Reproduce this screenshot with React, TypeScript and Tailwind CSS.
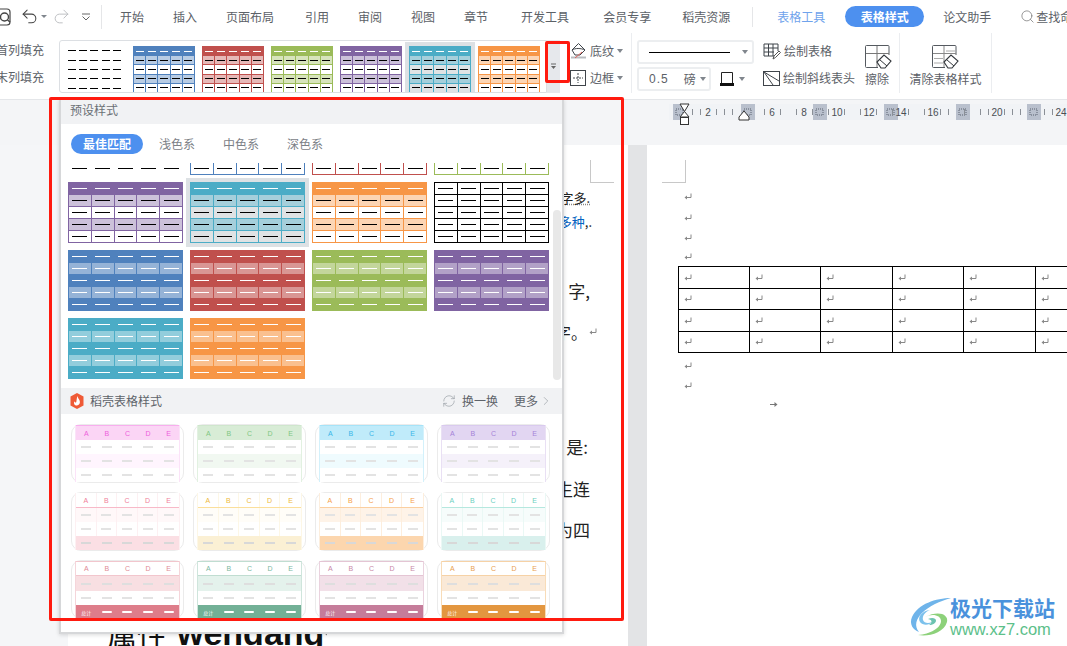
import React from "react";
import { Undo2, Redo2, RefreshCw, ChevronRight, Search } from "lucide-react";

const FONT = "font-['Noto_Sans_CJK_SC','Noto_Sans',sans-serif]";

type Sw = { hd: string; band: string; alt?: string; grid: string; dark?: boolean; sel?: boolean; mono?: boolean };

const blue: Sw = { hd: "bg-[#4f81bd]", band: "bg-[#b8cce4]", grid: "bg-[#4f81bd]" };
const red: Sw = { hd: "bg-[#c0504d]", band: "bg-[#e6b9b8]", grid: "bg-[#c0504d]" };
const green: Sw = { hd: "bg-[#9bbb59]", band: "bg-[#d7e4bc]", grid: "bg-[#9bbb59]" };
const purple: Sw = { hd: "bg-[#8064a2]", band: "bg-[#ccc1da]", grid: "bg-[#8064a2]" };
const teal: Sw = { hd: "bg-[#4bacc6]", band: "bg-[#a5cfdb]", alt: "bg-[#dfe2e4]", grid: "bg-[#4bacc6]", sel: true };
const orange: Sw = { hd: "bg-[#f79646]", band: "bg-[#fcd5b4]", grid: "bg-[#f79646]" };
const black: Sw = { hd: "bg-white", band: "bg-white", grid: "bg-black", mono: true };

const dBlue: Sw = { hd: "bg-[#4f81bd]", band: "bg-[#95b3d7]", grid: "bg-[#4f81bd]", dark: true };
const dRed: Sw = { hd: "bg-[#c0504d]", band: "bg-[#d99694]", grid: "bg-[#c0504d]", dark: true };
const dGreen: Sw = { hd: "bg-[#9bbb59]", band: "bg-[#c3d69b]", grid: "bg-[#9bbb59]", dark: true };
const dPurple: Sw = { hd: "bg-[#8064a2]", band: "bg-[#b2a1c7]", grid: "bg-[#8064a2]", dark: true };
const dTeal: Sw = { hd: "bg-[#4bacc6]", band: "bg-[#92cddc]", grid: "bg-[#4bacc6]", dark: true };
const dOrange: Sw = { hd: "bg-[#f79646]", band: "bg-[#fac08f]", grid: "bg-[#f79646]", dark: true };

const five = [0, 1, 2, 3, 4];

function Swatch({ s, small }: { s: Sw; small?: boolean }) {
  const size = small ? "w-[62px] h-[47px] shrink-0" : "w-[115px] h-[61px] shrink-0";
  const dash = small ? "w-[8px] h-px" : "w-[15px] h-px";
  const halo = s.sel ? "shadow-[0_0_0_4px_#dde1e4]" : "";
  return (
    <div className={`${size} ${halo} ${s.grid} grid grid-cols-5 grid-rows-5 gap-px p-px`}>
      {five.map((r) =>
        five.map((c) => {
          const isHead = r === 0;
          const isBand = r === 1 || r === 3;
          const bg = s.dark
            ? isBand ? s.band : s.hd
            : isHead ? s.hd : isBand ? s.band : s.alt ?? "bg-white";
          const white = s.dark || (isHead && !s.mono);
          return (
            <div key={`${r}-${c}`} className={`${bg} flex items-center justify-center`}>
              <div className={`${dash} ${white ? "bg-white" : "bg-black"}`} />
            </div>
          );
        })
      )}
    </div>
  );
}

function PlainSwatch({ small }: { small?: boolean }) {
  return (
    <div className={small ? "w-[57px] h-[47px] mr-[3px] shrink-0 grid grid-cols-5 grid-rows-5" : "w-[115px] h-[61px] shrink-0 grid grid-cols-5 grid-rows-5 gap-px p-px"}>
      {five.map((r) =>
        five.map((c) => (
          <div key={`${r}-${c}`} className="flex items-center justify-center">
            <div className={small ? "w-[8px] h-px bg-black" : "w-[15px] h-px bg-black"} />
          </div>
        ))
      )}
    </div>
  );
}

type Cd = {
  kind: "a" | "b" | "c";
  txt: string; hd: string; alt: string; foot: string; side: string; line: string;
};

const cards: Cd[] = [
  { kind: "a", txt: "text-[#ee5fdc]", hd: "bg-[#fbd5f5]", alt: "bg-[#fff5fe]", foot: "bg-white", side: "border-[#fbe3f8]", line: "border-[#f8aeee]" },
  { kind: "a", txt: "text-[#7fc783]", hd: "bg-[#d8ecd6]", alt: "bg-[#f1f8f1]", foot: "bg-white", side: "border-[#e2f1e1]", line: "border-[#cfe6cd]" },
  { kind: "a", txt: "text-[#38b6e8]", hd: "bg-[#c0ebfa]", alt: "bg-[#effbfe]", foot: "bg-white", side: "border-[#d3f1fb]", line: "border-[#a6e3f8]" },
  { kind: "a", txt: "text-[#a482d8]", hd: "bg-[#e2d6f2]", alt: "bg-[#f5f1fa]", foot: "bg-white", side: "border-[#e9e0f4]", line: "border-[#d9caee]" },
  { kind: "b", txt: "text-[#f0809a]", hd: "bg-white", alt: "bg-[#fff8f9]", foot: "bg-[#fbdfe4]", side: "border-[#fdf0f2]", line: "border-[#f8b9c8]" },
  { kind: "b", txt: "text-[#eeb93b]", hd: "bg-white", alt: "bg-[#fffdf8]", foot: "bg-[#fbf0d4]", side: "border-[#fdf7e6]", line: "border-[#fbdf9b]" },
  { kind: "b", txt: "text-[#f5a04a]", hd: "bg-white", alt: "bg-[#fef3e8]", foot: "bg-[#fcd6ae]", side: "border-[#fdeedd]", line: "border-[#fbcfa0]" },
  { kind: "b", txt: "text-[#6dd0c0]", hd: "bg-white", alt: "bg-[#f6fcfb]", foot: "bg-[#d9f0ed]", side: "border-[#eaf8f5]", line: "border-[#b5e8df]" },
  { kind: "c", txt: "text-[#e08a96]", hd: "bg-white", alt: "bg-[#f8dfe2]", foot: "bg-[#de7d8a]", side: "border-[#f5d5da]", line: "border-[#f2c6cd]" },
  { kind: "c", txt: "text-[#7ab89f]", hd: "bg-white", alt: "bg-[#e4f2ec]", foot: "bg-[#72b096]", side: "border-[#cfe5dc]", line: "border-[#c0ddd1]" },
  { kind: "c", txt: "text-[#c888a8]", hd: "bg-white", alt: "bg-[#f2e0e8]", foot: "bg-[#c57c9a]", side: "border-[#ead2de]", line: "border-[#e4c5d4]" },
  { kind: "c", txt: "text-[#e8a050]", hd: "bg-white", alt: "bg-[#fae9d7]", foot: "bg-[#e3963f]", side: "border-[#f8dcb8]", line: "border-[#f6d2a6]" },
];

function CardRow({ bg, dash, cols, first, strong, tall }: { bg: string; dash: string; cols?: string; first?: string; strong?: boolean; tall?: boolean }) {
  return (
    <div className={`${bg} ${tall ? "h-[15px]" : "h-[14px]"} grid grid-cols-5`}>
      {five.map((c) => (
        <div key={c} className={`flex items-center justify-center ${cols && c < 4 ? `border-r ${cols}` : ""}`}>
          {first && c === 0 ? (
            <span className={`text-[5px] leading-none text-white ${FONT}`}>{first}</span>
          ) : (
            <div className={`w-[10px] h-[2px] ${strong ? "rounded-full" : ""} ${dash}`} />
          )}
        </div>
      ))}
    </div>
  );
}

function Card({ d }: { d: Cd }) {
  const cols = d.kind === "b" ? d.side : undefined;
  return (
    <div className="w-[113px] h-[59px] rounded-[10px] border border-[#ebebeb] px-[3px] bg-white">
      <div className={`border-x ${d.side} h-full`}>
        <div className={`h-[15px] grid grid-cols-5 ${d.hd} ${d.kind === "b" ? `border-b ${d.line}` : ""} ${d.kind === "a" ? `border-t ${d.line}` : ""} ${d.kind === "c" ? `border-t border-b ${d.line}` : ""}`}>
          {["A", "B", "C", "D", "E"].map((l, i) => (
            <div key={l} className={`flex items-center justify-center text-[7px] leading-none font-['Liberation_Sans',sans-serif] ${d.txt} ${cols && i < 4 ? `border-r ${cols}` : ""}`}>
              {l}
            </div>
          ))}
        </div>
        {d.kind === "a" && (
          <>
            <CardRow bg="bg-white" dash="bg-[#e3e3e3]" />
            <CardRow bg={d.alt} dash="bg-[#e3e3e3]" />
            <CardRow bg="bg-white" dash="bg-[#e3e3e3]" />
          </>
        )}
        {d.kind === "b" && (
          <>
            <CardRow bg={d.alt} dash="bg-[#e3e3e3]" cols={cols} />
            <CardRow bg="bg-white" dash="bg-[#e3e3e3]" cols={cols} />
            <CardRow bg={d.foot} dash="bg-[#d8d8d8]" />
          </>
        )}
        {d.kind === "c" && (
          <>
            <CardRow bg={d.alt} dash="bg-[#dedede]" tall />
            <CardRow bg="bg-white" dash="bg-[#e3e3e3]" />
            <CardRow bg={d.foot} dash="bg-white" first="总计" strong />
          </>
        )}
      </div>
    </div>
  );
}

function Caret({ className = "" }: { className?: string }) {
  return <span className={`inline-block shrink-0 w-0 h-0 border-x-[3.5px] border-x-transparent border-t-[4px] border-t-[#80868d] ${className}`} />;
}

function Ret() {
  return (
    <svg width="8" height="8" viewBox="0 0 8 8" className="shrink-0">
      <path d="M7 0.5V4.5H2" fill="none" stroke="#888" strokeWidth="1" />
      <path d="M0.5 4.5L3 2.5V6.5Z" fill="#888" />
    </svg>
  );
}

const S = { fill: "none", stroke: "#3f444a", strokeWidth: 1 };

function ShadeIcon() {
  return (
    <svg width="17" height="18" viewBox="0 0 17 18" className="shrink-0">
      <path d="M2 8L8.5 1.5L15 8L10 13H5Z" {...S} />
      <path d="M2 8C5 6 11 6 15 8" {...S} />
      <path d="M1 15.5H16" stroke="#b9bcc0" strokeWidth="2" />
      <path d="M5 16L12 10" stroke="#e0605a" strokeWidth="1" />
    </svg>
  );
}
function BorderIcon() {
  return (
    <svg width="16" height="16" viewBox="0 0 16 16" className="shrink-0">
      <rect x="0.5" y="0.5" width="15" height="15" {...S} />
      <path d="M8 3V13M3 8H13" stroke="#3f444a" strokeWidth="1" strokeDasharray="2 1" />
    </svg>
  );
}
function FrameIcon() {
  return (
    <svg width="16" height="16" viewBox="0 0 16 16">
      <path d="M2.5 12V1.5H13.5V12" fill="none" stroke="#222" strokeWidth="1" />
      <rect x="1" y="12" width="14" height="3" fill="#111" />
    </svg>
  );
}
function DrawTableIcon() {
  return (
    <svg width="18" height="17" viewBox="0 0 18 17" className="shrink-0">
      <path d="M11 13H1V1H15V8M1 5H15M1 9H11M5.5 1V13M10 1V13" {...S} />
      <path d="M10 16L11 13L16 8L17.5 9.5L12.5 14.5Z" fill="none" stroke="#555" strokeWidth="1" />
    </svg>
  );
}
function DiagIcon() {
  return (
    <svg width="17" height="15" viewBox="0 0 17 15" className="shrink-0">
      <rect x="0.5" y="0.5" width="16" height="14" {...S} />
      <path d="M1 1L16 10M1 1L10 14" {...S} />
    </svg>
  );
}
function EraseIcon({ lined }: { lined?: boolean }) {
  return (
    <svg width="27" height="24" viewBox="0 0 27 24" className="shrink-0">
      <path d="M13 22.5H1.5a1 1 0 0 1-1-1V1.5a1 1 0 0 1 1-1H23a1 1 0 0 1 1 1V10" fill="none" stroke="#555a60" strokeWidth="1" />
      <path d="M1 8.5H24M12 1V22" stroke={lined ? "#888" : "#777"} strokeWidth="1" />
      {lined && <path d="M2 13.5H11M2 18H11M14 6H23" stroke="#aaa" strokeWidth="1" />}
      <path d="M12 17L19 10L26 16L20 23H16Z" fill="#fff" stroke="#33373c" strokeWidth="1.1" />
      <path d="M14.5 14.5L22 21" stroke="#33373c" strokeWidth="1" />
    </svg>
  );
}
function Flame() {
  return (
    <svg width="14" height="16" viewBox="0 0 14 16" className="shrink-0">
      <path d="M7 0L13.5 3.6V12.4L7 16L0.5 12.4V3.6Z" fill="#ef5a36" />
      <path d="M7.5 3C8 6 10.5 7 9.8 10C9.3 12 7.5 12.8 6 12.4C4.2 12 3.5 10 4.4 8.2C4.8 9.3 5.5 9.6 6 9.4C6.8 8.6 6.4 5.5 7.5 3Z" fill="#fff" />
    </svg>
  );
}

function Ruler() {
  const blocks = [673, 741, 813, 884, 956, 1027];
  const nums: [number, string][] = [[708, "2"], [772, "6"], [804, "8"], [837, "10"], [869, "12"], [901, "14"], [933, "16"], [997, "20"], [1061, "24"]];
  const ticks = [692, 700, 716, 724, 732, 764, 780, 796, 812, 828, 844, 860, 876, 892, 908, 924, 940, 948, 964, 980, 988, 1004, 1012, 1020, 1044, 1052];
  const o = 669;
  return (
    <svg width="398" height="26" viewBox="0 0 398 26" className="mt-[2px]">
      <rect x="0" y="2" width="398" height="16" fill="#f1f3f6" />
      {blocks.map((b) => (
        <g key={b}>
          <rect x={b - o} y="2" width={b === 673 ? 12 : 14} height="16" fill="#b9c0cd" />
          <rect x={b - o + 3} y="7" width="7" height="6" fill="none" stroke="#5b6270" strokeWidth="1" strokeDasharray="1 1" />
        </g>
      ))}
      {ticks.map((t) => (
        <path key={t} d={`M${t - o + 0.5} 7V13`} stroke="#8a8f96" strokeWidth="1" />
      ))}
      {nums.map(([x, n]) => (
        <text key={x} x={x - o} y="14" textAnchor="middle" fontSize="10" fill="#4a4f55" fontFamily="Liberation Sans, sans-serif">{n}</text>
      ))}
      <path d="M11 2H20L15.5 9.5Z" fill="#fff" stroke="#333" strokeWidth="1" />
      <path d="M15.5 9.5L20 15H11Z" fill="#fff" stroke="#333" strokeWidth="1" />
      <rect x="11.5" y="15.5" width="8" height="7" fill="#fff" stroke="#333" strokeWidth="1" />
      <path d="M70 15L75 9L80 15V18H70Z" fill="#fff" stroke="#333" strokeWidth="1" />
    </svg>
  );
}

function TabLabel({ children, cls }: { children: React.ReactNode; cls: string }) {
  return <span className={`${cls} shrink-0 text-[12px] leading-none whitespace-nowrap text-[#5c6167]`}>{children}</span>;
}

function TopBar() {
  return (
    <div className="h-[33px] flex items-center bg-white shrink-0">
      <div className="w-[101px] shrink-0 flex items-center h-full">
        <svg width="12" height="18" viewBox="0 0 12 18" className="shrink-0">
          <rect x="-7" y="1" width="17" height="16" rx="3" fill="none" stroke="#444" strokeWidth="1.2" />
          <circle cx="4.5" cy="9" r="4" fill="none" stroke="#444" strokeWidth="1.4" />
          <path d="M7.5 12L10 14" stroke="#444" strokeWidth="1.4" />
        </svg>
        <Undo2 size={19} strokeWidth={1.3} className="ml-[8px] shrink-0 text-[#444]" />
        <Caret className="ml-[2px] !border-t-[3px]" />
        <Redo2 size={19} strokeWidth={1.1} className="ml-[5px] shrink-0 text-[#b5b8bb]" />
        <svg width="10" height="8" viewBox="0 0 10 8" className="ml-[10px] shrink-0">
          <path d="M1 1H9" stroke="#666" />
          <path d="M1.5 3.5L5 7L8.5 3.5" fill="none" stroke="#666" />
        </svg>
      </div>
      <div className="w-px h-[24px] shrink-0 bg-[#e5e6e8]" />
      <TabLabel cls="ml-[18px]">开始</TabLabel>
      <TabLabel cls="ml-[29px]">插入</TabLabel>
      <TabLabel cls="ml-[29px]">页面布局</TabLabel>
      <TabLabel cls="ml-[31px]">引用</TabLabel>
      <TabLabel cls="ml-[29px]">审阅</TabLabel>
      <TabLabel cls="ml-[29px]">视图</TabLabel>
      <TabLabel cls="ml-[29px]">章节</TabLabel>
      <TabLabel cls="ml-[33px]">开发工具</TabLabel>
      <TabLabel cls="ml-[34px]">会员专享</TabLabel>
      <TabLabel cls="ml-[31px]">稻壳资源</TabLabel>
      <div className="w-px h-[20px] shrink-0 bg-[#e5e6e8] ml-[22px]" />
      <span className="ml-[24px] shrink-0 text-[12px] leading-none whitespace-nowrap text-[#6fa3ec]">表格工具</span>
      <span className="ml-[20px] shrink-0 w-[79px] h-[21px] rounded-full bg-[#4d90ef] text-white text-[12px] font-bold flex items-center justify-center whitespace-nowrap">表格样式</span>
      <TabLabel cls="ml-[19px]">论文助手</TabLabel>
      <Search size={15} strokeWidth={1.2} className="ml-[29px] text-[#777] shrink-0" />
      <span className="ml-[1px] shrink-0 text-[12px] leading-none whitespace-nowrap text-[#5c6167]">查找命令</span>
    </div>
  );
}

function Ribbon() {
  return (
    <div className="h-[67px] bg-white flex items-start border-b border-[#e4e6e9] shrink-0 text-[12px] text-[#5c6167]">
      <div className="w-[44px] shrink-0 flex flex-col items-end pt-[8px] gap-[9px]">
        <span className="h-[18px] leading-[18px] whitespace-nowrap">首列填充</span>
        <span className="h-[18px] leading-[18px] whitespace-nowrap">末列填充</span>
      </div>
      <div className="ml-[15px] mt-[7px] flex h-[53px] w-[501px] shrink-0">
        <div className="w-[488px] h-full border border-[#dcdfe3] rounded-l-[3px] overflow-hidden flex pl-[6px] pt-[5px] gap-[7px]">
          <PlainSwatch small />
          <Swatch s={blue} small />
          <Swatch s={red} small />
          <Swatch s={green} small />
          <Swatch s={purple} small />
          <Swatch s={teal} small />
          <Swatch s={orange} small />
        </div>
        <div className="w-[13px] bg-[#e6e8ec] flex items-center justify-center">
          <svg width="7" height="7" viewBox="0 0 7 7">
            <path d="M1 1H6" stroke="#666" />
            <path d="M1 3H6L3.5 6Z" fill="#666" />
          </svg>
        </div>
      </div>
      <div className="ml-[10px] w-[62px] shrink-0 flex flex-col pt-[9px] gap-[9px] border-r border-[#ebedf0] h-[60px]">
        <div className="h-[18px] flex items-center">
          <ShadeIcon />
          <span className="ml-[3px] leading-none whitespace-nowrap">底纹</span>
          <Caret className="ml-[3px]" />
        </div>
        <div className="h-[18px] flex items-center">
          <BorderIcon />
          <span className="ml-[4px] leading-none whitespace-nowrap">边框</span>
          <Caret className="ml-[3px]" />
        </div>
      </div>
      <div className="ml-[5px] w-[117px] shrink-0 pt-[7px] flex flex-col gap-[3px]">
        <div className="h-[24px] border-2 border-[#eceef0] rounded-[3px] flex items-center pl-[10px] pr-[4px]">
          <div className="w-[81px] h-px bg-black" />
          <Caret className="ml-auto" />
        </div>
        <div className="flex items-center h-[24px]">
          <div className="w-[74px] h-full border-2 border-[#eceef0] rounded-[3px] flex items-center pl-[10px] pr-[3px]">
            <span className="font-['Liberation_Sans',sans-serif] text-[12px] tracking-[1px]">0.5</span>
            <span className="ml-[15px] whitespace-nowrap">磅</span>
            <Caret className="ml-auto" />
          </div>
          <span className="ml-[8px]"><FrameIcon /></span>
          <Caret className="ml-[4px]" />
        </div>
      </div>
      <div className="ml-[9px] w-[102px] shrink-0 pt-[9px] flex flex-col gap-[9px]">
        <div className="h-[18px] flex items-center gap-[3px] whitespace-nowrap leading-none"><DrawTableIcon />绘制表格</div>
        <div className="h-[18px] flex items-center gap-[3px] whitespace-nowrap leading-none"><DiagIcon />绘制斜线表头</div>
      </div>
      <div className="w-[34px] shrink-0 flex flex-col items-start pt-[12px]">
        <EraseIcon />
        <span className="mt-[1px] leading-[18px] whitespace-nowrap">擦除</span>
      </div>
      <div className="w-[93px] shrink-0 h-[60px] border-x border-[#ebedf0] flex flex-col items-center pt-[12px]">
        <EraseIcon lined />
        <span className="mt-[1px] leading-[18px] whitespace-nowrap">清除表格样式</span>
      </div>
    </div>
  );
}

function Panel() {
  return (
    <div className={`absolute left-[59px] top-[99px] w-[505px] h-[535px] bg-white border-x-2 border-b-2 border-[#d6d7d9] shadow-[0_1px_4px_rgba(0,0,0,0.15)] flex flex-col text-[12px] ${FONT}`}>
      <div className="h-[25px] shrink-0 bg-[#f1f2f4] pl-[9px] pb-[3px] flex items-center text-[#6b7076]">预设样式</div>
      <div className="h-[20px] mt-[10px] ml-[10px] shrink-0 flex items-center text-[#7c8187]">
        <span className="w-[72px] h-[20px] rounded-full bg-[#4d90ef] text-white font-bold flex items-center justify-center">最佳匹配</span>
        <span className="ml-[16px]">浅色系</span>
        <span className="ml-[28px]">中色系</span>
        <span className="ml-[28px]">深色系</span>
      </div>
      <div className="relative mt-[9px] h-[225px] shrink-0 overflow-hidden">
        <div className="grid grid-cols-[115px_115px_115px_115px] gap-x-[7px] gap-y-[7px] pl-[7px] mt-[-49px]">
          <PlainSwatch />
          <Swatch s={blue} />
          <Swatch s={red} />
          <Swatch s={green} />
          <Swatch s={purple} />
          <Swatch s={teal} />
          <Swatch s={orange} />
          <Swatch s={black} />
          <Swatch s={dBlue} />
          <Swatch s={dRed} />
          <Swatch s={dGreen} />
          <Swatch s={dPurple} />
          <Swatch s={dTeal} />
          <Swatch s={dOrange} />
        </div>
        <div className="absolute left-[492px] top-[47px] w-[8px] h-[170px] rounded-full bg-[#e8e8e8]" />
      </div>
      <div className="h-[26px] shrink-0 bg-[#f1f2f4] flex items-center pl-[9px] pr-[9px] text-[#5e636a]">
        <Flame />
        <span className="ml-[6px]">稻壳表格样式</span>
        <RefreshCw size={14} strokeWidth={1} className="ml-auto text-[#8a9097]" />
        <span className="ml-[6px]">换一换</span>
        <span className="ml-[16px]">更多</span>
        <ChevronRight size={14} strokeWidth={1} className="ml-[1px] text-[#8a9097]" />
      </div>
      <div className="pt-[10px] pl-[10px] grid grid-cols-[113px_113px_113px_113px] gap-x-[9px] gap-y-[9px]">
        {cards.map((d, i) => <Card key={i} d={d} />)}
      </div>
    </div>
  );
}

function LeftPage() {
  return (
    <div className={`w-[560px] shrink-0 h-full bg-white relative flex flex-col items-end pr-[38px] text-[16px] text-[#222] ${FONT}`}>
      <div className="absolute left-[522px] top-[15px] w-[24px] h-[23px] border-l border-b border-[#c8c8c8]" />
      <div className="mt-[41px] h-[24px] leading-[24px] text-[13px] underline decoration-dotted decoration-[#888]">文字多.</div>
      <div className="h-[24px] leading-[24px] text-[13px] mr-[-2px]"><span className="text-[#0563c1]">多种</span>,.</div>
      <div className="mt-[45px] h-[24px] leading-[24px] text-[17px]">字,</div>
      <div className="mt-[17px] h-[24px] leading-[24px] flex items-center gap-[2px] mr-[-7px]">文字。<Ret /></div>
      <div className="mt-[91px] h-[24px] leading-[24px] text-[17px] mr-[2px]">是:</div>
      <div className="mt-[18px] h-[24px] leading-[24px] text-[17px]">生连</div>
      <div className="mt-[17px] h-[24px] leading-[24px] text-[17px]">为四</div>
      <div className="mt-[71px] self-start ml-[39px] h-[40px] leading-[40px] text-[30px] flex items-center text-[#111] whitespace-nowrap">
        <span>属性</span>
        <span className="ml-[10px] font-['Liberation_Sans',sans-serif] font-bold text-[34px] underline decoration-wavy decoration-[#e0261c] decoration-1 underline-offset-1">wendang</span>
        <Ret />
      </div>
    </div>
  );
}

function RightPage() {
  const widths = ["w-[71px]", "w-[71px]", "w-[72px]", "w-[71px]", "w-[72px]", "w-[72px]"];
  const heights = ["h-[22px]", "h-[21px]", "h-[22px]", "h-[21px]"];
  return (
    <div className="flex-1 h-full bg-white relative overflow-hidden">
      <div className="absolute left-[15px] top-[15px] w-[24px] h-[23px] border-r border-b border-[#c8c8c8]" />
      <div className="pt-[41px] pl-[37px]">
        <div className="h-[21px] flex items-center"><Ret /></div>
        <div className="h-[21px] flex items-center"><Ret /></div>
        <div className="h-[20px] flex items-center"><Ret /></div>
        <div className="h-[18px] flex items-center"><Ret /></div>
      </div>
      <div className="ml-[31px] w-[500px] border-t border-l border-black">
        {heights.map((h, r) => (
          <div key={r} className={`flex ${h} border-b border-black`}>
            {widths.map((w, c) => (
              <div key={c} className={`${w} shrink-0 border-r border-black flex items-center pl-[5px]`}><Ret /></div>
            ))}
          </div>
        ))}
      </div>
      <div className="pl-[37px] pt-[3px]">
        <div className="h-[20px] flex items-center"><Ret /></div>
        <div className="h-[20px] flex items-center"><Ret /></div>
        <div className="h-[16px] flex items-center pl-[86px]">
          <svg width="8" height="7" viewBox="0 0 8 7"><path d="M0 3.5H6" stroke="#777" /><path d="M4.5 1L7.5 3.5L4.5 6Z" fill="#777" /></svg>
        </div>
      </div>
    </div>
  );
}

function Watermark() {
  return (
    <div className="absolute left-[908px] top-[595px] flex items-start pointer-events-none">
      <svg width="44" height="44" viewBox="0 0 44 44" className="shrink-0">
        <path d="M43 3C28 3 10 9 4 22C1 29 5 35 11 37C6 31 8 24 14 18C21 11 32 6 43 3Z" fill="#6fb4ea" />
        <path d="M22 15C14 16 9 22 12 27C15 31 22 30 24 27C20 29 16 28 15 25C14 21 17 17 22 15Z" fill="#7cc1ec" />
        <path d="M17 22C24 18 33 20 33 26C33 33 22 39 10 40C20 42 36 38 39 27C41 19 30 15 17 22Z" fill="#8dd17a" />
        <path d="M20 24C24 22 28 23 28 25.5C28 28 25 30 21 30C24 28 25 25 20 24Z" fill="#6cc3b0" />
      </svg>
      <div className="-ml-[2px] flex flex-col">
        <span className={`text-[21px] leading-[24px] font-bold text-[#4a92dc] whitespace-nowrap ${FONT}`}>极光下载站</span>
        <span className="mt-[1px] text-[16.5px] leading-[18px] text-[#5cc08a] font-['Liberation_Sans',sans-serif] whitespace-nowrap">www.xz7.com</span>
      </div>
    </div>
  );
}

export default function App() {
  return (
    <div className={`relative w-[1067px] h-[646px] overflow-hidden bg-[#f4f5f7] flex flex-col ${FONT}`}>
      <TopBar />
      <Ribbon />
      <div className="h-[45px] shrink-0 flex justify-end bg-[#f4f5f7]">
        <Ruler />
      </div>
      <div className="flex-1 min-h-0 flex">
        <div className="w-[68px] shrink-0 bg-[#f5f6f8]" />
        <LeftPage />
        <div className="w-[19px] shrink-0 bg-[#e3e4e6]" />
        <RightPage />
      </div>
      <Panel />
      <div className="absolute left-[49px] top-[97px] w-[575px] h-[524px] border-[3px] border-[#ff1a0f] rounded-[2px] pointer-events-none" />
      <div className="absolute left-[545px] top-[41px] w-[25px] h-[42px] border-[3px] border-[#ff1a0f] rounded-[2px] pointer-events-none" />
      <Watermark />
    </div>
  );
}
